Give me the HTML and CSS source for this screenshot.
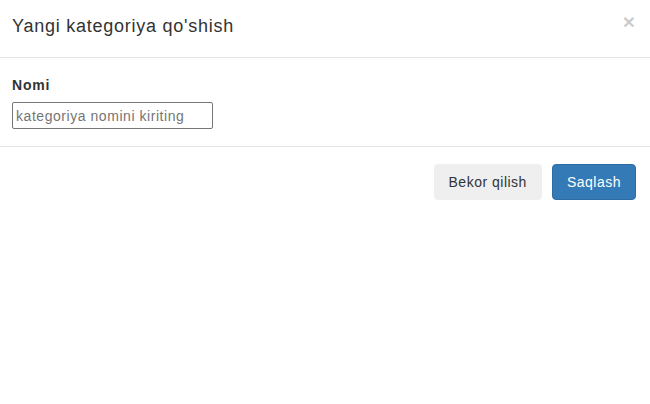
FILE: index.html
```html
<!DOCTYPE html>
<html>
<head>
<meta charset="utf-8">
<link rel="stylesheet" href="styles.css">
</head>
<body>
<div class="modal">
  <div class="modal-header">
    <h4 class="modal-title">Yangi kategoriya qo'shish</h4>
    <span class="close">×</span>
  </div>
  <div class="modal-body">
    <label class="field-label">Nomi</label>
    <input class="field-input" type="text" placeholder="kategoriya nomini kiriting">
  </div>
  <div class="modal-footer">
    <button class="btn btn-default">Bekor qilish</button>
    <button class="btn btn-primary">Saqlash</button>
  </div>
</div>
</body>
</html>
```
FILE: styles.css
```css
html, body {
  margin: 0;
  background: #fff;
}
body {
  font-family: "Liberation Sans", Arial, sans-serif;
  color: #333;
  font-size: 14px;
}
.modal {
  width: 650px;
}
.modal-header {
  display: flex;
  justify-content: space-between;
  align-items: flex-start;
  padding: 13px 15px 18px 12px;
  border-bottom: 1px solid #e5e5e5;
}
.modal-title {
  margin: 0;
  font-size: 18px;
  line-height: 26px;
  font-weight: normal;
  letter-spacing: 0.75px;
}
.close {
  font-size: 21px;
  font-weight: bold;
  line-height: 21px;
  color: #000;
  opacity: 0.2;
  margin-top: -2px;
}
.modal-body {
  padding: 17px 12px 17px 12px;
}
.field-label {
  display: block;
  font-weight: bold;
  font-size: 14px;
  line-height: 20px;
  margin-bottom: 7px;
  letter-spacing: 0.8px;
}
.field-input {
  display: block;
  box-sizing: border-box;
  width: 201px;
  height: 27px;
  margin: 0;
  padding: 1px 3px;
  border: 1px solid #767676;
  border-radius: 2px;
  font-family: "Liberation Sans", Arial, sans-serif;
  font-size: 14px;
  letter-spacing: 0.55px;
  color: #333;
}
.field-input::placeholder {
  color: #757575;
}
.modal-footer {
  display: flex;
  justify-content: flex-end;
  gap: 10px;
  padding: 17px 14px 17px 12px;
  border-top: 1px solid #e5e5e5;
}
.btn {
  box-sizing: border-box;
  height: 36px;
  padding: 0 14px;
  border-radius: 4px;
  font-family: "Liberation Sans", Arial, sans-serif;
  font-size: 14px;
  letter-spacing: 0.5px;
  cursor: pointer;
}
.btn-default {
  background: #efefef;
  border: 1px solid #efefef;
  color: #333;
}
.btn-primary {
  background: #337ab7;
  border: 1px solid #2e6da4;
  color: #fff;
}
```
